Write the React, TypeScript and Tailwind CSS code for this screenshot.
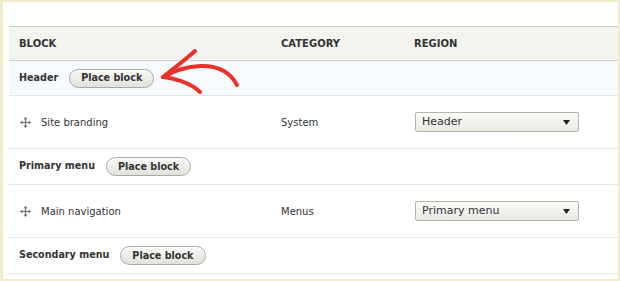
const font = { fontFamily: '"DejaVu Sans", "Liberation Sans", sans-serif' };

const DragIcon = () => (
  <svg width="11" height="11" viewBox="0 0 11 11" className="shrink-0">
    <path d="M5.5 1.5v8M1.5 5.5h8" stroke="#6d6d6d" strokeWidth="1.2" />
    <path d="M5.5 0L3.5 2.3h4zM5.5 11L3.5 8.7h4zM0 5.5L2.3 3.5v4zM11 5.5L8.7 3.5v4z" fill="#6d6d6d" />
  </svg>
);

const PlaceButton = () => (
  <button className="h-[19px] px-[11px] rounded-full border border-[#a9a9a4] bg-linear-to-b from-[#f8f8f5] to-[#e2e2dd] text-[9.6px] font-bold text-[#333] leading-none shadow-[inset_0_1px_0_#fff]">
    Place block
  </button>
);

const RegionSelect = ({ value }: { value: string }) => (
  <div className="w-[164px] h-[20px] flex items-center justify-between pl-[6px] pr-[8px] rounded-[2px] border border-[#b5b5b0] bg-linear-to-b from-[#fbfbf9] to-[#e9e9e4] text-[11px] text-[#333]">
    <span>{value}</span>
    <svg width="7" height="5" viewBox="0 0 7 5">
      <path d="M0 0h7L3.5 5z" fill="#222" />
    </svg>
  </div>
);

const RegionRow = ({ label, h, first }: { label: string; h: string; first?: boolean }) => (
  <div
    className={`${h} flex items-center gap-[11px] pl-[10px] border-b ${
      first ? "bg-[#f6fafd] border-[#e1e6ea]" : "border-[#e6e6e2]"
    }`}
  >
    <span className="text-[9.6px] font-bold text-[#333]">{label}</span>
    <PlaceButton />
  </div>
);

const BlockRow = ({ name, category, region }: { name: string; category: string; region: string }) => (
  <div className="h-[53px] grid grid-cols-[262px_134px_1fr] items-center border-b border-[#e6e6e2] text-[10px] text-[#333]">
    <div className="flex items-center gap-[10px] pl-[11px]">
      <DragIcon />
      <span>{name}</span>
    </div>
    <div className="pl-[10px]">{category}</div>
    <div className="pl-[10px]">
      <RegionSelect value={region} />
    </div>
  </div>
);

export default function App() {
  return (
    <div
      style={font}
      className="relative w-[620px] h-[281px] bg-white border-l-[3px] border-t-2 border-r-2 border-b-2 border-[#f1ecc8] pl-[6px] pt-[24px] overflow-hidden"
    >
      <div className="h-[35px] grid grid-cols-[262px_134px_1fr] items-center bg-[#f3f3ef] border-t border-b border-[#d0d0cb] text-[10px] font-bold text-[#333] uppercase">
        <div className="pl-[10px]">Block</div>
        <div className="pl-[10px]">Category</div>
        <div className="pl-[9px]">Region</div>
      </div>
      <RegionRow label="Header" h="h-[35px]" first />
      <BlockRow name="Site branding" category="System" region="Header" />
      <RegionRow label="Primary menu" h="h-[36px]" />
      <BlockRow name="Main navigation" category="Menus" region="Primary menu" />
      <RegionRow label="Secondary menu" h="h-[36px]" />

      {/* hand-drawn annotation arrow */}
      <svg className="absolute left-0 top-0 pointer-events-none" width="620" height="281" viewBox="3 2 620 281">
        <g stroke="#e8322c" strokeWidth="4" strokeLinecap="round" fill="none">
          <path d="M164 77 C 180 66, 222 56, 237 85" />
          <path d="M195 51 C 185 60, 172 70, 163 77" />
          <path d="M163 77 C 172 78, 190 82, 200 92" />
        </g>
      </svg>
    </div>
  );
}
